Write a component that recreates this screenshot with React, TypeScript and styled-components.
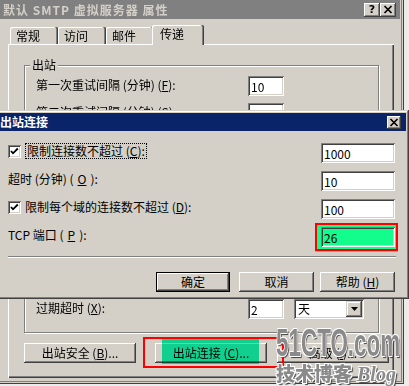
import React from "react";
import styled, { createGlobalStyle, css } from "styled-components";

const FONT = `"Noto Sans CJK SC", "Noto Sans", "DejaVu Sans", sans-serif`;

const GlobalStyle = createGlobalStyle`
  html, body { margin: 0; padding: 0; }
  body {
    width: 409px;
    height: 386px;
    overflow: hidden;
    background: #ebebeb;
    font-family: ${FONT};
    font-size: 12px;
    color: #000;
  }
  #root { width: 409px; height: 386px; }
`;

const raised = css`
  box-shadow: inset -1px -1px 0 #404040, inset 1px 1px 0 #ffffff,
    inset -2px -2px 0 #808080;
`;

const sunken = css`
  box-shadow: inset 1px 1px 0 #808080, inset -1px -1px 0 #ffffff,
    inset 2px 2px 0 #404040, inset -2px -2px 0 #d4d0c8;
`;

const Stage = styled.div`
  position: relative;
  width: 409px;
  height: 386px;
  overflow: hidden;
`;

const Window = styled.div`
  position: relative;
  width: 404px;
  height: 384px;
  box-sizing: border-box;
  padding-right: 4px;
  background: #d4d0c8;
  box-shadow: inset -1px -1px 0 #404040, inset -2px -2px 0 #d4d0c8,
    inset -3px -3px 0 #808080;
  display: flex;
  flex-direction: column;
`;

const TitleBar = styled.div<{ $active?: boolean }>`
  flex: none;
  height: ${(p) => (p.$active ? 18 : 19)}px;
  box-sizing: border-box;
  display: flex;
  align-items: center;
  justify-content: space-between;
  padding: ${(p) => (p.$active ? "0 5px 0 1px" : "0 4px 0 3px")};
  background: ${(p) => (p.$active ? "#0a246a" : "#808080")};
  color: ${(p) => (p.$active ? "#ffffff" : "#d4d0c8")};
  font-weight: bold;
  font-size: 12px;
  line-height: 14px;
  letter-spacing: ${(p) => (p.$active ? 0 : 1)}px;
  white-space: nowrap;
`;

const TitleButtons = styled.div`
  display: flex;
  align-items: center;
`;

const TitleButton = styled.div<{ $w: number; $h: number }>`
  width: ${(p) => p.$w}px;
  height: ${(p) => p.$h}px;
  box-sizing: border-box;
  background: #d4d0c8;
  ${raised};
  display: flex;
  align-items: center;
  justify-content: center;
  color: #000;
  font-family: "DejaVu Sans", sans-serif;
  font-weight: bold;
  font-size: 11px;
  line-height: 1;
  letter-spacing: 0;
`;

const TabStrip = styled.div`
  flex: none;
  height: 19px;
  margin-top: 6px;
  padding-left: 10px;
  display: flex;
  align-items: flex-end;
  position: relative;
  z-index: 1;
`;

const Tab = styled.div<{ $selected?: boolean }>`
  box-sizing: border-box;
  width: ${(p) => (p.$selected ? 52 : 48)}px;
  height: ${(p) => (p.$selected ? 20 : 17)}px;
  margin: 0 ${(p) => (p.$selected ? "-2px -1px -2px" : "0 0 0")};
  padding: ${(p) => (p.$selected ? "0 0 2px 8px" : "0 0 0 6px")};
  background: #d4d0c8;
  border-radius: 2px 2px 0 0;
  box-shadow: inset -1px 0 0 #404040, inset -2px 0 0 #808080,
    inset 1px 1px 0 #ffffff;
  display: flex;
  align-items: center;
  line-height: 14px;
`;

const Panel = styled.div`
  flex: 1;
  width: 386px;
  margin: 0 0 6px 8px;
  box-sizing: border-box;
  padding: 14px 0 15px 16px;
  box-shadow: inset 1px 1px 0 #ffffff, inset -1px -1px 0 #404040,
    inset -2px -2px 0 #808080;
  display: flex;
  flex-direction: column;
`;

const Group = styled.fieldset`
  flex: 1;
  min-width: 0;
  width: 355px;
  margin: 0;
  box-sizing: border-box;
  border: 1px solid #808080;
  box-shadow: 1px 1px 0 #ffffff, inset 1px 1px 0 #ffffff;
  padding: 4px 0 13px 11px;
  display: flex;
  flex-direction: column;
  gap: 7px;
`;

const Legend = styled.legend`
  padding: 0 2px;
  margin-left: -6px;
  line-height: 14px;
  background: #d4d0c8;
`;

const Spacer = styled.div`
  flex: 1;
`;

const FieldRow = styled.div`
  flex: none;
  height: 20px;
  display: flex;
  align-items: center;
`;

const FieldLabel = styled.span`
  width: 212px;
  flex: none;
  line-height: 14px;
  padding-bottom: 2px;
  white-space: nowrap;
`;

const Key = styled.span`
  text-decoration: underline;
`;

const TextBox = styled.input<{ $w: number; $mark?: boolean }>`
  width: ${(p) => p.$w}px;
  height: 20px;
  box-sizing: border-box;
  margin: 0;
  border: none;
  outline: none;
  padding: 2px 3px;
  background: ${(p) => (p.$mark ? "#13fd8d" : "#ffffff")};
  ${sunken};
  font-family: ${FONT};
  font-size: 12px;
  line-height: 16px;
  color: #000;
`;

const Select = styled.div`
  width: 70px;
  height: 20px;
  margin-left: 10px;
  box-sizing: border-box;
  padding: 2px 2px 2px 4px;
  background: #ffffff;
  ${sunken};
  display: flex;
  align-items: center;
  justify-content: space-between;
  line-height: 16px;
`;

const DropButton = styled.div`
  width: 16px;
  height: 16px;
  box-sizing: border-box;
  background: #d4d0c8;
  box-shadow: inset -1px -1px 0 #404040, inset 1px 1px 0 #d4d0c8,
    inset -2px -2px 0 #808080, inset 2px 2px 0 #ffffff;
  display: flex;
  align-items: center;
  justify-content: center;
`;

const ButtonRow = styled.div<{ $end?: boolean }>`
  flex: none;
  display: flex;
  justify-content: ${(p) => (p.$end ? "flex-end" : "flex-start")};
  gap: ${(p) => (p.$end ? 6 : 10)}px;
  margin-top: ${(p) => (p.$end ? 14 : 10)}px;
`;

const PushButton = styled.div<{ $w: number; $default?: boolean; $ml?: number; $mr?: number }>`
  width: ${(p) => p.$w}px;
  height: 20px;
  flex: none;
  margin-left: ${(p) => p.$ml ?? 0}px;
  margin-right: ${(p) => p.$mr ?? 0}px;
  box-sizing: border-box;
  background: #d4d0c8;
  ${(p) =>
    p.$default
      ? css`
          box-shadow: inset 0 0 0 1px #000000, inset -2px -2px 0 #404040,
            inset 2px 2px 0 #ffffff, inset -3px -3px 0 #808080;
        `
      : raised};
  display: flex;
  align-items: center;
  justify-content: center;
  line-height: 14px;
  white-space: nowrap;
`;

const Dialog = styled.div`
  position: absolute;
  left: -4px;
  top: 110px;
  z-index: 5;
  width: 413px;
  height: 189px;
  box-sizing: border-box;
  padding: 3px;
  background: #d4d0c8;
  box-shadow: inset -1px -1px 0 #404040, inset 1px 1px 0 #d4d0c8,
    inset -2px -2px 0 #808080, inset 2px 2px 0 #ffffff;
  display: flex;
  flex-direction: column;
`;

const DialogBody = styled.div`
  flex: 1;
  padding: 12px 11px 0 9px;
  display: flex;
  flex-direction: column;
`;

const DialogRows = styled.div`
  display: flex;
  flex-direction: column;
  gap: 8px;
`;

const DialogRow = styled.div`
  height: 20px;
  display: flex;
  align-items: center;
  justify-content: space-between;
`;

const LabelGroup = styled.div`
  display: flex;
  align-items: center;
  gap: 4px;
  padding-bottom: 4px;
  line-height: 14px;
  white-space: nowrap;
`;

const CheckBox = styled.span`
  width: 13px;
  height: 13px;
  flex: none;
  box-sizing: border-box;
  background: #ffffff;
  ${sunken};
  display: inline-flex;
`;

const FocusText = styled.span`
  border: 1px dotted #000;
  padding: 0 1px;
`;

const MarkFrame = styled.span`
  display: inline-flex;
  margin: -4px -3px -4px -6px;
  padding: 2px 1px 2px 4px;
  border: 2px solid #ff0000;
  background: #13fd8d;
  box-shadow: 0 1px 0 #13fd8d;
`;

const Separator = styled.div`
  height: 0;
  margin: 9px -1px 0 0;
  border-top: 1px solid #808080;
  border-bottom: 1px solid #ffffff;
`;

const RedFrame = styled.div`
  position: absolute;
  left: 143px;
  top: 337px;
  width: 141px;
  height: 31px;
  box-sizing: border-box;
  border: 2px solid #ff0000;
  z-index: 3;
`;

const Marker = styled.div`
  position: absolute;
  left: 162px;
  top: 339px;
  width: 97px;
  height: 25px;
  background: #14ffb6;
  mix-blend-mode: multiply;
  z-index: 2;
`;

const Watermark = styled.div`
  position: absolute;
  left: 276px;
  top: 325px;
  z-index: 10;
  display: flex;
  flex-direction: column;
  color: #8a8a8a;
  text-shadow: -1px -1px 0 #fff, 1px -1px 0 #fff, -1px 1px 0 #fff,
    1px 1px 0 #fff, 2px 2px 1px #444;
  white-space: nowrap;
  pointer-events: none;
`;

const WmSite = styled.div`
  font-family: "Liberation Sans", Arial, sans-serif;
  font-weight: bold;
  font-size: 38px;
  line-height: 36px;
  transform: scaleX(0.59);
  transform-origin: left top;
`;

const WmBlog = styled.div`
  display: flex;
  align-items: baseline;
  gap: 5px;
  line-height: 24px;
`;

const WmCn = styled.span`
  font-family: ${FONT};
  font-weight: 900;
  font-size: 19px;
`;

const WmEn = styled.span`
  font-family: "Liberation Serif", serif;
  font-weight: bold;
  font-style: italic;
  font-size: 20px;
`;

const CloseGlyph = () => (
  <svg width="10" height="9" viewBox="0 0 10 9">
    <path d="M1.5 1 L8.5 8 M8.5 1 L1.5 8" stroke="#000" strokeWidth="1.7" fill="none" />
  </svg>
);

const CheckGlyph = () => (
  <svg width="9" height="9" viewBox="0 0 9 9" style={{ margin: "2px" }}>
    <polyline points="1,4 3,6.3 7.8,1.5" stroke="#000" strokeWidth="1.8" fill="none" />
  </svg>
);

const ArrowGlyph = () => (
  <svg width="7" height="4" viewBox="0 0 7 4">
    <polygon points="0,0 7,0 3.5,4" fill="#000" />
  </svg>
);

export default function App() {
  return (
    <Stage>
      <GlobalStyle />
      <Window>
        <TitleBar>
          <span>默认 SMTP 虚拟服务器 属性</span>
          <TitleButtons>
            <TitleButton $w={16} $h={14}>?</TitleButton>
            <TitleButton $w={16} $h={14}>
              <CloseGlyph />
            </TitleButton>
          </TitleButtons>
        </TitleBar>
        <TabStrip>
          <Tab>常规</Tab>
          <Tab>访问</Tab>
          <Tab>邮件</Tab>
          <Tab $selected>传递</Tab>
        </TabStrip>
        <Panel>
          <Group>
            <Legend>出站</Legend>
            <FieldRow>
              <FieldLabel>
                第一次重试间隔 (分钟) (<Key>F</Key>):
              </FieldLabel>
              <TextBox $w={36} readOnly defaultValue="10" />
            </FieldRow>
            <FieldRow>
              <FieldLabel>
                第二次重试间隔 (分钟) (<Key>S</Key>):
              </FieldLabel>
              <TextBox $w={36} readOnly defaultValue="10" />
            </FieldRow>
            <Spacer />
            <FieldRow>
              <FieldLabel>
                过期超时 (<Key>X</Key>):
              </FieldLabel>
              <TextBox $w={36} readOnly defaultValue="2" />
              <Select>
                <span>天</span>
                <DropButton>
                  <ArrowGlyph />
                </DropButton>
              </Select>
            </FieldRow>
          </Group>
          <ButtonRow>
            <PushButton $w={112}>
              出站安全 (<Key>B</Key>)...
            </PushButton>
            <PushButton $w={112} $ml={9}>
              出站连接 (<Key>C</Key>)...
            </PushButton>
            <PushButton $w={112}>
              高级 (<Key>I</Key>)...
            </PushButton>
          </ButtonRow>
        </Panel>
        <Marker />
        <RedFrame />
      </Window>

      <Dialog>
        <TitleBar $active>
          <span>出站连接</span>
          <TitleButton $w={14} $h={13}>
            <CloseGlyph />
          </TitleButton>
        </TitleBar>
        <DialogBody>
          <DialogRows>
            <DialogRow>
              <LabelGroup>
                <CheckBox>
                  <CheckGlyph />
                </CheckBox>
                <FocusText>
                  限制连接数不超过 (<Key>C</Key>):
                </FocusText>
              </LabelGroup>
              <TextBox $w={74} readOnly defaultValue="1000" />
            </DialogRow>
            <DialogRow>
              <LabelGroup>
                超时 (分钟) (<Key>O</Key>):
              </LabelGroup>
              <TextBox $w={74} readOnly defaultValue="10" />
            </DialogRow>
            <DialogRow>
              <LabelGroup>
                <CheckBox>
                  <CheckGlyph />
                </CheckBox>
                <span>
                  限制每个域的连接数不超过 (<Key>D</Key>):
                </span>
              </LabelGroup>
              <TextBox $w={74} readOnly defaultValue="100" />
            </DialogRow>
            <DialogRow>
              <LabelGroup>
                TCP 端口 (<Key>P</Key>):
              </LabelGroup>
              <MarkFrame>
                <TextBox $w={74} $mark readOnly defaultValue="26" />
              </MarkFrame>
            </DialogRow>
          </DialogRows>
          <Separator />
          <ButtonRow $end>
            <PushButton $w={74} $default $mr={3}>
              确定
            </PushButton>
            <PushButton $w={75}>取消</PushButton>
            <PushButton $w={75}>
              帮助 (<Key>H</Key>)
            </PushButton>
          </ButtonRow>
        </DialogBody>
      </Dialog>

      <Watermark>
        <WmSite>51CTO.com</WmSite>
        <WmBlog>
          <WmCn>技术博客</WmCn>
          <WmEn>Blog</WmEn>
        </WmBlog>
      </Watermark>
    </Stage>
  );
}
